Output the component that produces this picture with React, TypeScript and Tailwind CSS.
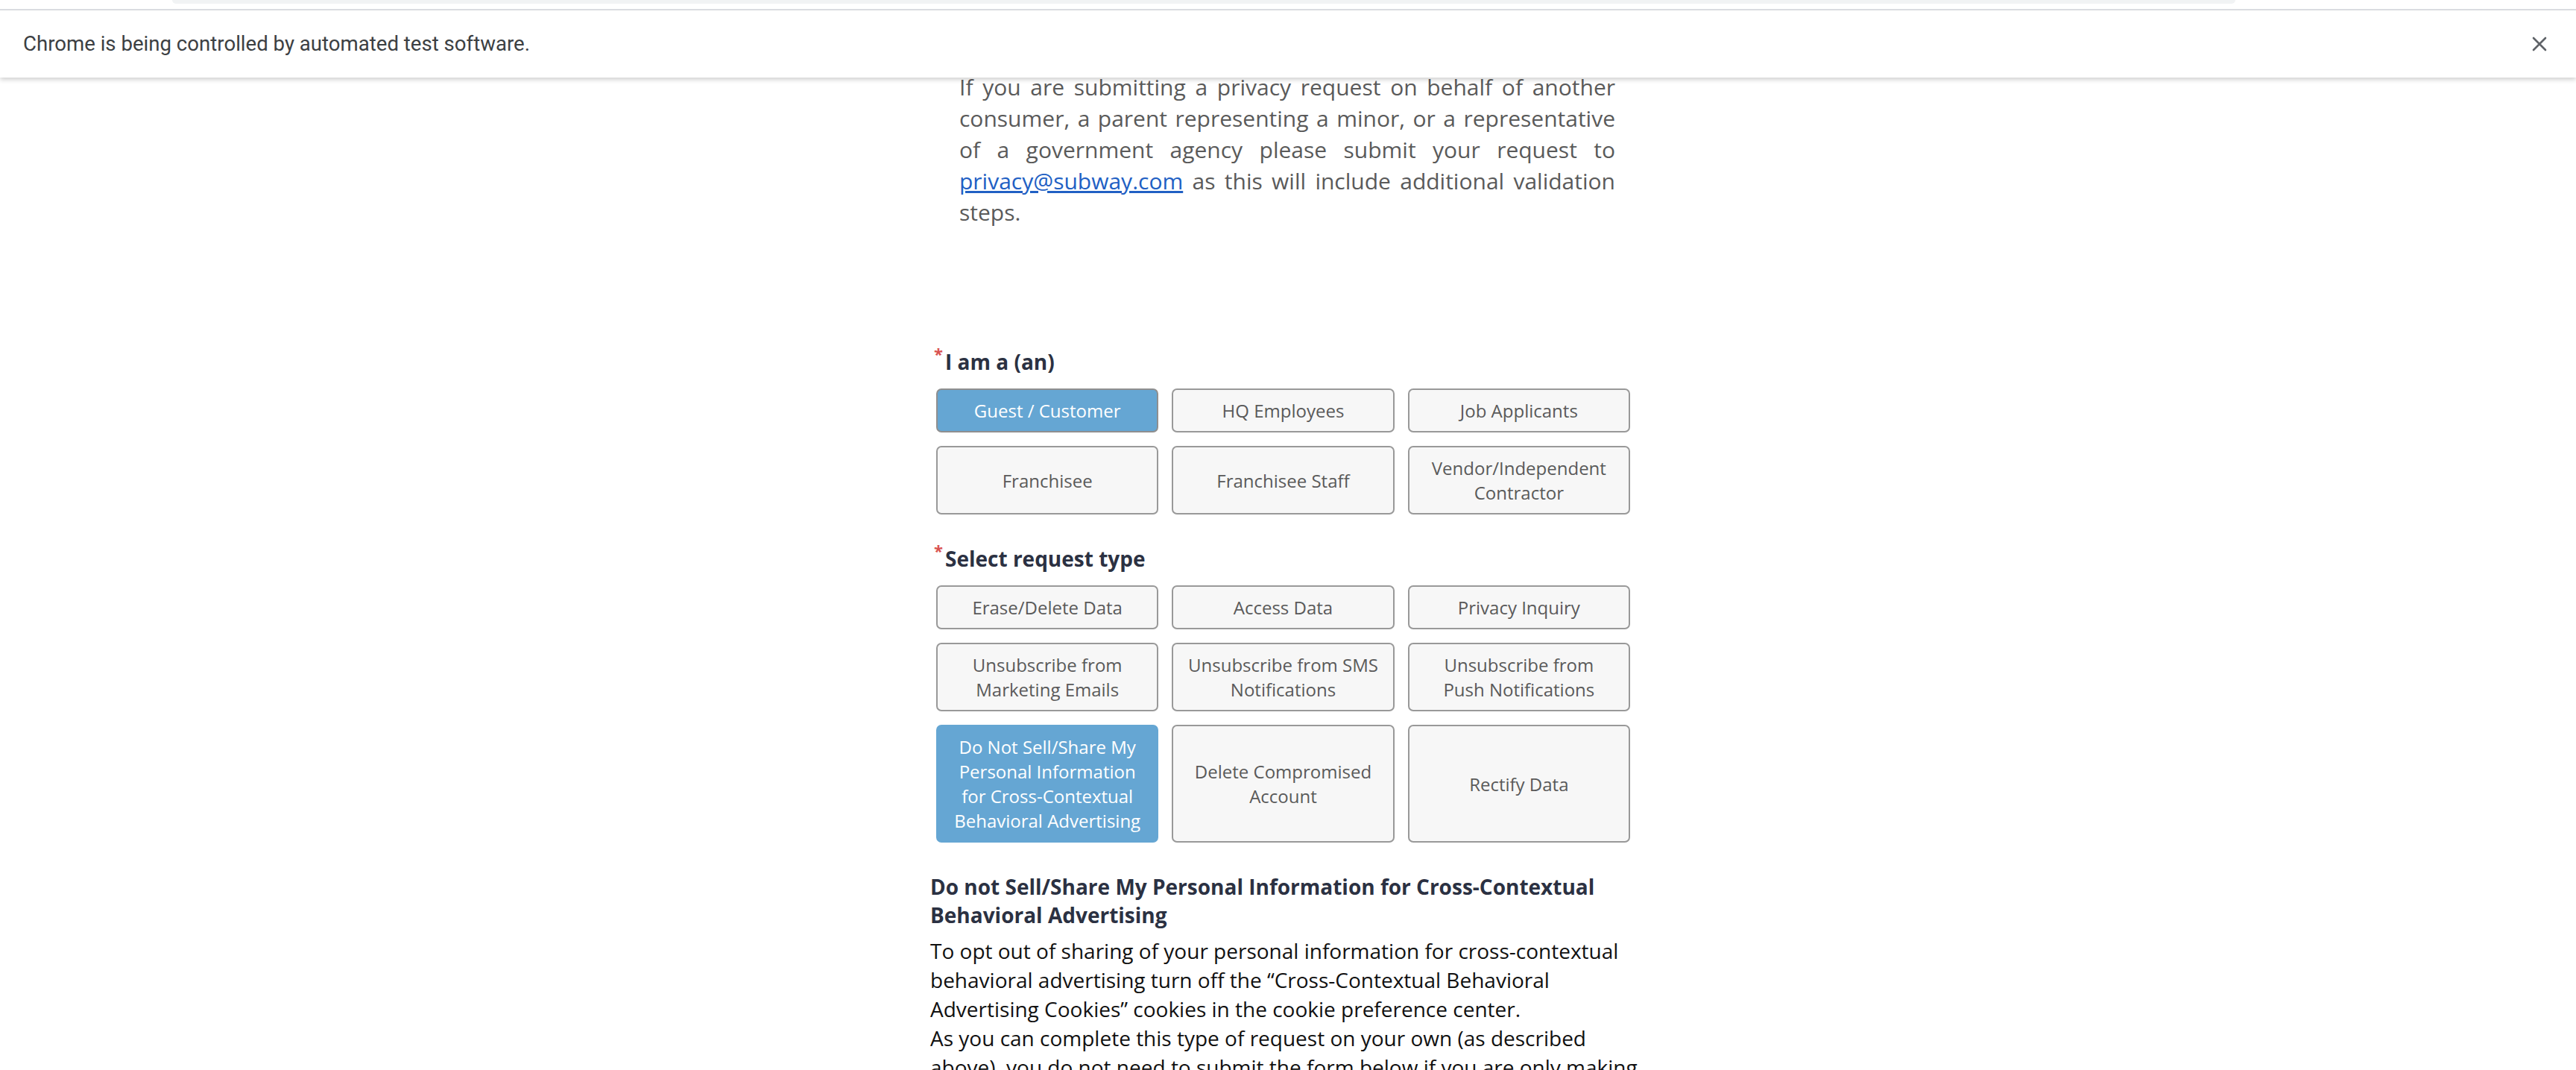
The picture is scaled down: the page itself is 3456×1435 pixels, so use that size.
import React from "react";

const roles = [
  { label: "Guest / Customer", active: true },
  { label: "HQ Employees" },
  { label: "Job Applicants" },
  { label: "Franchisee" },
  { label: "Franchisee Staff" },
  { label: "Vendor/Independent\nContractor" },
];

const requestTypes = [
  { label: "Erase/Delete Data" },
  { label: "Access Data" },
  { label: "Privacy Inquiry" },
  { label: "Unsubscribe from\nMarketing Emails" },
  { label: "Unsubscribe from SMS\nNotifications" },
  { label: "Unsubscribe from\nPush Notifications" },
  { label: "Do Not Sell/Share My\nPersonal Information\nfor Cross-Contextual\nBehavioral Advertising", active: true, plain: true },
  { label: "Delete Compromised\nAccount" },
  { label: "Rectify Data" },
];

export default function App() {
  return (
    <div className="min-h-screen bg-white font-['Open_Sans',sans-serif]">
      {/* browser info bar */}
      <div className="relative z-10 bg-white shadow-[0_3px_6px_rgba(0,0,0,0.18)]">
        <div className="h-[14px] px-[231px] border-b-2 border-[#dadce0]">
          <div className="h-[5px] mr-[226px] bg-[#f1f3f4] rounded-b-[16px]"></div>
        </div>
        <div className="h-[90px] flex items-center justify-between pl-[31px] pr-[38px] font-['Roboto',sans-serif] text-[27.6px] text-[#3c4043]">
          <span>Chrome is being controlled by automated test software.</span>
          <svg width="22" height="22" viewBox="0 0 22 22" className="text-[#5f6368]">
            <path d="M3 3 L19 19 M19 3 L3 19" stroke="currentColor" strokeWidth="2.6" strokeLinecap="round" />
          </svg>
        </div>
      </div>

      <div className="h-[1331px] overflow-hidden">
        <div className="mx-auto w-[960px] pr-[4px] -mt-[8px]">
          <p className="ml-[39px] w-[880px] text-[30px] leading-[42px] text-[#5a5a5a] text-justify">
            If you are submitting a privacy request on behalf of another consumer, a parent representing a minor, or a representative of a government agency please submit your request to{" "}
            <a href="#" className="text-[#2160c4] underline">privacy@subway.com</a> as this will include additional validation steps.
          </p>

          <FieldLabel text="I am a (an)" className="mt-[159px]" />
          <OptionGrid items={roles} />

          <FieldLabel text="Select request type" className="mt-[39px]" />
          <OptionGrid items={requestTypes} />

          <h3 className="mt-[40px] text-[28px] leading-[38px] font-bold text-[#2b3142]">
            Do not Sell/Share My Personal Information for Cross-Contextual Behavioral Advertising
          </h3>
          <div className="mt-[10px] text-[28px] leading-[39px] text-[#111]">
            <p>
              To opt out of sharing of your personal information for cross-contextual behavioral advertising turn off the “Cross-Contextual Behavioral Advertising Cookies” cookies in the cookie preference center.
            </p>
            <p>
              As you can complete this type of request on your own (as described above), you do not need to submit the form below if you are only making this request.
            </p>
          </div>
        </div>
      </div>
    </div>
  );
}

function FieldLabel({ text, className }: { text: string; className?: string }) {
  return (
    <div className={`flex items-start pl-[5px] h-[40px] ${className || ""}`}>
      <span className="text-[#d9534f] text-[22px] leading-[22px] font-bold mt-[-2px] w-[15px]">*</span>
      <span className="text-[28px] leading-[40px] font-bold text-[#2b3142]">{text}</span>
    </div>
  );
}

function OptionGrid({ items }: { items: { label: string; active?: boolean; plain?: boolean }[] }) {
  return (
    <div className="mt-[16px] ml-[8px] w-[931px] grid grid-cols-3 gap-[18px]">
      {items.map((item) => (
        <div
          key={item.label}
          className={`flex items-center justify-center text-center whitespace-pre-line rounded-[7px] border-2 px-[8px] py-[11px] text-[24px] leading-[33px] ${
            item.active
              ? `bg-[#65a6d3] text-white ${item.plain ? "border-[#65a6d3]" : "border-[#8f8f8f]"}`
              : "bg-[#f7f7f7] text-[#5a5a5a] border-[#999999]"
          }`}
        >
          {item.label}
        </div>
      ))}
    </div>
  );
}
